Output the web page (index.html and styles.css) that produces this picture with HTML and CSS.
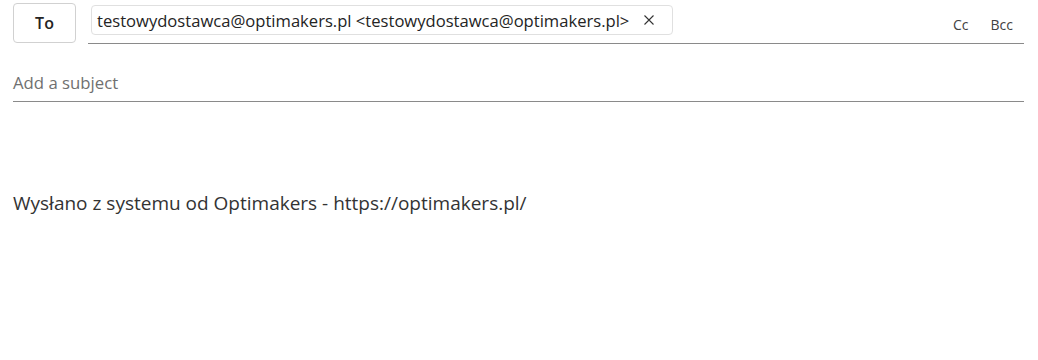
FILE: index.html
```html
<!DOCTYPE html>
<html>
<head>
<meta charset="utf-8">
<link rel="stylesheet" href="styles.css">
</head>
<body>
<div class="compose">
  <div class="to-row">
    <button class="to-btn">To</button>
    <div class="to-field">
      <div class="chip">
        <span class="chip-text">testowydostawca@optimakers.pl &lt;testowydostawca@optimakers.pl&gt;</span>
        <svg class="chip-x" width="10" height="10" viewBox="0 0 10 10"><path d="M0.5 0.5L9.5 9.5M9.5 0.5L0.5 9.5" stroke="#333" stroke-width="1.1" fill="none"/></svg>
      </div>
      <div class="cc-links">
        <span class="cc">Cc</span>
        <span class="bcc">Bcc</span>
      </div>
    </div>
  </div>
  <div class="subject">Add a subject</div>
  <div class="body-text">Wysłano z systemu od Optimakers - https://optimakers.pl/</div>
</div>
</body>
</html>
```

FILE: styles.css
```css
html, body {
  margin: 0;
  padding: 0;
  background: #ffffff;
}
body {
  font-family: "Open Sans", "Noto Sans", sans-serif;
  color: #242424;
}
.compose {
  width: 1011px;
  padding-left: 13px;
  padding-top: 3px;
}
.to-row {
  display: flex;
  align-items: flex-start;
  gap: 12px;
}
.to-btn {
  width: 63px;
  height: 40px;
  border: 1px solid #d1d1d1;
  border-radius: 4px;
  background: #fff;
  font-family: "Open Sans", sans-serif;
  font-weight: 600;
  font-size: 16px;
  color: #242424;
  padding: 0;
}
.to-field {
  flex: 1;
  height: 38px;
  border-bottom: 1px solid #8a8a8a;
  display: flex;
  align-items: flex-start;
  padding-top: 2px;
  padding-left: 3px;
}
.chip {
  height: 30px;
  box-sizing: border-box;
  border: 1px solid #e0e0e0;
  border-radius: 4px;
  display: flex;
  align-items: center;
  padding: 0 18px 0 5px;
  gap: 15px;
}
.chip-text {
  font-size: 16.6px;
  line-height: 20px;
  padding-top: 1px;
  color: #242424;
  white-space: nowrap;
}
.chip-x {
  display: block;
}
.cc-links {
  margin-left: auto;
  display: flex;
  gap: 22px;
  padding-top: 10px;
  padding-right: 11px;
  font-size: 14px;
  color: #424242;
}
.subject {
  margin-top: 18px;
  height: 40px;
  box-sizing: border-box;
  border-bottom: 1px solid #8a8a8a;
  font-size: 16.75px;
  line-height: 22px;
  color: #707070;
  padding-top: 10px;
}
.body-text {
  margin-top: 89px;
  font-size: 19px;
  line-height: 24px;
  color: #333333;
}
```
